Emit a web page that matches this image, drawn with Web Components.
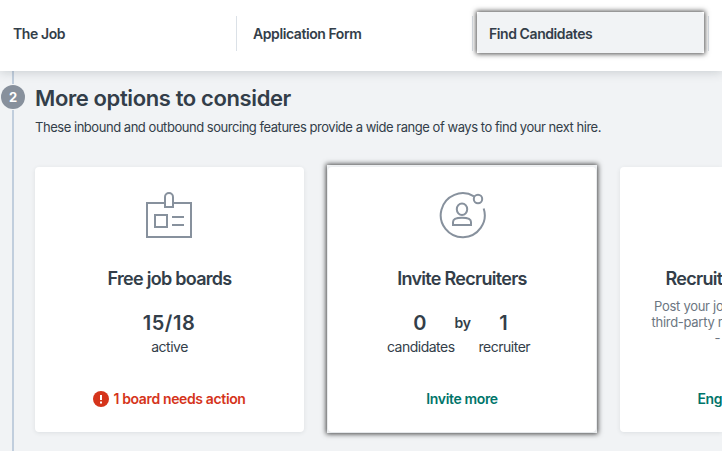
<!DOCTYPE html>
<html lang="en">
<head>
<meta charset="utf-8">
<title>Find Candidates</title>
<style>
  body {
    margin: 0;
    width: 722px;
    height: 451px;
    overflow: hidden;
    background: #f1f3f5;
    color: #333e49;
    font-family: Inter, "Liberation Sans", sans-serif;
  }
</style>
</head>
<body>
<candidates-page></candidates-page>
<script>
/**
 * Creates a template element from a string.
 *
 * @param {string} html The markup.
 * @returns {HTMLTemplateElement} The template.
 */
const createTemplate = (html) => {
  const template = document.createElement('template')
  template.innerHTML = html
  return template
}

/**
 * Registers an element that only needs a shadow root.
 *
 * @param {string} name The tag name.
 * @param {string} html The markup of the shadow root.
 */
const define = (name, html) => {
  const template = createTemplate(html)
  customElements.define(name, class extends HTMLElement {
    /**
     * Creates an instance of the current type.
     */
    constructor () {
      super()
      this.attachShadow({ mode: 'open' })
        .appendChild(template.content.cloneNode(true))
    }
  })
}

// A square frame with a dark shadow around what is slotted into it.
define('focus-frame', `
  <style>
    :host {
      display: block;
      box-sizing: border-box;
      background: #f1f3f5;
      box-shadow: 0 0 5px 1px rgba(0, 0, 0, .7);
    }
  </style>
  <slot></slot>
`)

define('step-tab', `
  <style>
    :host {
      display: flex;
      flex: none;
      align-items: center;
      box-sizing: border-box;
      width: 236px;
      height: 35px;
      padding-left: 16px;
      border-right: 1px solid #dbe1e7;
      font-size: 14px;
      line-height: 20px;
      font-weight: 600;
      letter-spacing: -.42px;
      white-space: nowrap;
    }
  </style>
  <slot></slot>
`)

define('step-tabs', `
  <style>
    :host {
      display: flex;
      position: relative;
      box-sizing: border-box;
      height: 71px;
      padding-top: 16px;
      background: #fff;
      box-shadow: 0 1px 10px rgba(51, 62, 73, .22);
    }
    step-tab:first-of-type {
      width: 237px;
      padding-left: 13px;
    }
    step-tab[active] {
      padding-left: 4px;
    }
    focus-frame {
      flex: none;
      width: 227px;
      height: 41px;
      margin-top: -2px;
      background: #fff;
    }
    .fill {
      box-sizing: border-box;
      height: 41px;
      padding: 12px 0 0 12px;
      border-radius: 4px;
      background: #f1f3f5;
    }
  </style>
  <step-tab>The Job</step-tab>
  <step-tab>Application Form</step-tab>
  <step-tab active><focus-frame><div class="fill">Find Candidates</div></focus-frame></step-tab>
`)

define('step-rail', `
  <style>
    :host {
      display: flex;
      flex: none;
      flex-direction: column;
      align-items: center;
      width: 26px;
    }
    i {
      width: 2px;
      height: 13px;
      background: #c1cedd;
    }
    i:last-child {
      flex: 1;
    }
    b {
      width: 24px;
      height: 24px;
      margin: 1px 0;
      border-radius: 50%;
      background: #87909c;
      color: #fff;
      font-size: 13px;
      line-height: 25px;
      text-align: center;
    }
  </style>
  <i></i><b><slot></slot></b><i></i>
`)

define('board-icon', `
  <style>:host { display: block; height: 48px; } svg { display: block; }</style>
  <svg width="48" height="48" fill="none" stroke="#87919d" stroke-width="2">
    <path d="M20 12H2v34h44V12H28"/>
    <path d="M20 16V6a4 4 0 0 1 8 0v10z"/>
    <path d="M10 24h12v12H10zM27 26h12M27 34h12"/>
  </svg>
`)

define('recruiter-icon', `
  <style>:host { display: block; height: 48px; } svg { display: block; }</style>
  <svg width="48" height="48" fill="none" stroke="#87919d" stroke-width="2">
    <path d="M36 5.300A22 22 0 1 0 45.700 17.500"/>
    <circle cx="40" cy="8" r="4.2"/>
    <ellipse cx="24" cy="18.3" rx="5.2" ry="5.8"/>
    <path d="M15 34v-3c0-3 4-4.2 9-4.2s9 1.200 9 4.200v3z"/>
  </svg>
`)

define('alert-icon', `
  <style>:host { display: block; } svg { display: block; }</style>
  <svg width="16" height="16">
    <circle cx="8" cy="8" r="8" fill="#d5341b"/>
    <path d="M7 4h2v5H7zM7 10.500h2v2H7z" fill="#fff"/>
  </svg>
`)

define('option-card', `
  <style>
    :host {
      display: flex;
      flex-direction: column;
      align-items: center;
      box-sizing: border-box;
      height: 265px;
      padding-top: 24px;
      border-radius: 4px;
      background: #fff;
      box-shadow: 0 1px 4px rgba(51, 62, 73, .1);
      white-space: nowrap;
    }
    .icon {
      height: 48px;
      margin-right: 1px;
    }
    .title {
      margin-top: 28px;
      font-size: 18px;
      line-height: 24px;
      font-weight: 600;
      letter-spacing: -.72px;
    }
    .body {
      height: 84px;
      margin-top: 12px;
    }
    .action {
      display: flex;
      align-items: center;
      gap: 4px;
      margin-top: 2px;
      font-size: 14px;
      line-height: 20px;
      font-weight: 600;
      letter-spacing: -.36px;
      color: #00756a;
    }
    :host([warning]) .action {
      color: #d5341b;
    }
    :host([cut]) {
      align-items: flex-start;
      border-radius: 4px 0 0 4px;
      overflow: hidden;
    }
    :host([cut]) .title {
      margin-left: 45.5px;
    }
    :host([cut]) .action {
      margin-left: 77.5px;
    }
  </style>
  <div class="icon"><slot name="icon"></slot></div>
  <div class="title"><slot name="title"></slot></div>
  <div class="body"><slot></slot></div>
  <div class="action"><slot name="action"></slot></div>
`)

define('stat-count', `
  <style>
    :host {
      display: flex;
      flex-direction: column;
      align-items: center;
      padding-top: 8px;
    }
    .value {
      font-size: 20px;
      line-height: 24px;
      font-weight: 600;
      letter-spacing: .55px;
      margin-right: 1px;
    }
    .label {
      font-size: 14px;
      line-height: 24px;
      letter-spacing: -.5px;
    }
  </style>
  <div class="value"><slot></slot></div>
  <div class="label"><slot name="label"></slot></div>
`)

define('candidates-page', `
  <style>
    :host {
      display: block;
    }
    main {
      display: flex;
      height: 380px;
    }
    section {
      flex: 1;
      min-width: 0;
      padding-left: 9px;
    }
    h1 {
      margin: 13px 0 0;
      font-size: 22px;
      line-height: 28px;
      font-weight: 600;
      letter-spacing: -.38px;
    }
    p {
      margin: 5px 0 0;
      font-size: 13px;
      line-height: 20px;
      letter-spacing: -.465px;
      white-space: nowrap;
    }
    .cards {
      display: grid;
      grid-template-columns: 269px 270px 102px;
      column-gap: 23px;
      align-items: start;
      margin-top: 30px;
    }
    focus-frame {
      height: 268px;
      margin-top: -2px;
      padding: 2px 1px 1px;
    }
    .pair {
      display: flex;
      margin-left: -7px;
    }
    .by {
      width: 24px;
      padding-top: 8px;
      font-size: 14px;
      line-height: 24px;
      font-weight: 600;
      letter-spacing: -.2px;
    }
    .lines {
      margin-top: -5px;
      padding-left: 31.5px;
      font-size: 13px;
      line-height: 16px;
      letter-spacing: -.28px;
      color: #6c7681;
    }
    .lines div:first-child {
      padding-left: 2.5px;
    }
    .lines div:last-child {
      padding-left: 63px;
    }
  </style>
  <step-tabs></step-tabs>
  <main>
    <step-rail>2</step-rail>
    <section>
      <h1>More options to consider</h1>
      <p>These inbound and outbound sourcing features provide a wide range of ways to find your next hire.</p>
      <div class="cards">
        <option-card warning>
          <board-icon slot="icon"></board-icon>
          <span slot="title">Free job boards</span>
          <stat-count>15/18<span slot="label">active</span></stat-count>
          <alert-icon slot="action"></alert-icon>
          <span slot="action">1 board needs action</span>
        </option-card>
        <focus-frame>
          <option-card>
            <recruiter-icon slot="icon"></recruiter-icon>
            <span slot="title">Invite Recruiters</span>
            <div class="pair">
              <stat-count>0<span slot="label">candidates</span></stat-count>
              <div class="by">by</div>
              <stat-count>1<span slot="label">recruiter</span></stat-count>
            </div>
            <span slot="action">Invite more</span>
          </option-card>
        </focus-frame>
        <option-card cut>
          <span slot="title">Recruit</span>
          <div class="lines">
            <div>Post your jo</div>
            <div>third-party re</div>
            <div>-</div>
          </div>
          <span slot="action">Eng</span>
        </option-card>
      </div>
    </section>
  </main>
`)
</script>
</body>
</html>
